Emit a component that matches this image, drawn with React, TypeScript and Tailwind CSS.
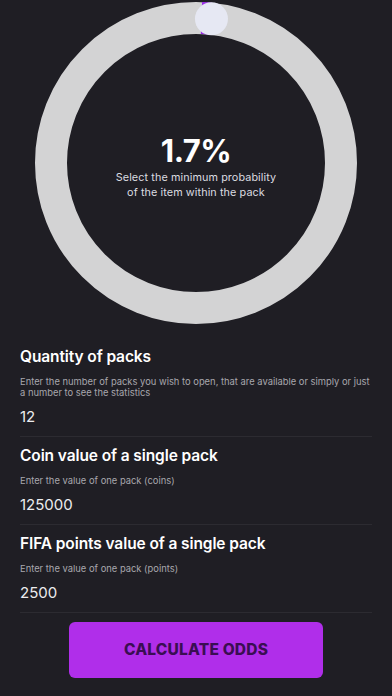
import React from "react";

function Ring() {
  const size = 322;
  const c = size / 2;
  const r = 145;
  const pct = 0.017;
  const start = 0.006;
  const angle = pct * 2 * Math.PI;
  const tx = c + r * Math.sin(angle);
  const ty = c - r * Math.cos(angle);
  const circ = 2 * Math.PI * r;
  return (
    <svg width={size} height={size} viewBox={`0 0 ${size} ${size}`} className="absolute inset-0">
      <circle cx={c} cy={c} r={r} fill="none" stroke="#d3d3d4" strokeWidth={32} />
      <circle
        cx={c}
        cy={c}
        r={r}
        fill="none"
        stroke="#9a2ee6"
        strokeWidth={32}
        strokeDasharray={`${circ * (pct - start)} ${circ}`}
        transform={`rotate(${-90 + start * 360} ${c} ${c})`}
      />
      <circle cx={tx} cy={ty} r={16.5} fill="#e6e8f3" />
    </svg>
  );
}

function Field({ title, desc, value }: { title: string; desc: React.ReactNode; value: string }) {
  return (
    <div className="border-b border-[#2c2b31] pb-[9px] pt-[8px]">
      <div className="text-[15.5px] leading-[22px] font-semibold text-white tracking-[-0.1px]">{title}</div>
      <div className="mt-[8px] whitespace-nowrap text-[9.4px] leading-[11px] text-[#a8a7ad]">{desc}</div>
      <div className="mt-[9px] text-[15px] leading-[20px] text-[#ececee]">{value}</div>
    </div>
  );
}

export default function App() {
  return (
    <div
      className="w-[392px] h-[696px] bg-[#1f1e24] overflow-hidden"
      style={{ fontFamily: "Inter, 'Liberation Sans', sans-serif" }}
    >
      <div className="relative mx-auto mt-[2px] w-[322px] h-[322px]">
        <Ring />
        <div className="absolute inset-0 flex flex-col items-center justify-center pt-[8px]">
          <div className="text-[31px] leading-[34px] font-bold text-white tracking-[-0.5px]">1.7%</div>
          <div className="mt-[2px] text-center text-[10.8px] leading-[15px] text-[#dcdce0] tracking-[0.1px]">
            Select the minimum probability
            <br />
            of the item within the pack
          </div>
        </div>
      </div>
      <div className="px-5 pt-[14px]">
        <Field
          title="Quantity of packs"
          desc={
            <>
              Enter the number of packs you wish to open, that are available or simply or just
              <br />a number to see the statistics
            </>
          }
          value="12"
        />
        <Field title="Coin value of a single pack" desc="Enter the value of one pack (coins)" value="125000" />
        <Field title="FIFA points value of a single pack" desc="Enter the value of one pack (points)" value="2500" />
      </div>
      <div className="flex justify-center pt-[9px]">
        <button className="w-[254px] h-[56px] rounded-[6px] bg-[#b02eea] text-[15.5px] font-extrabold text-[#3a0e52] tracking-[0.2px]">
          CALCULATE ODDS
        </button>
      </div>
    </div>
  );
}
